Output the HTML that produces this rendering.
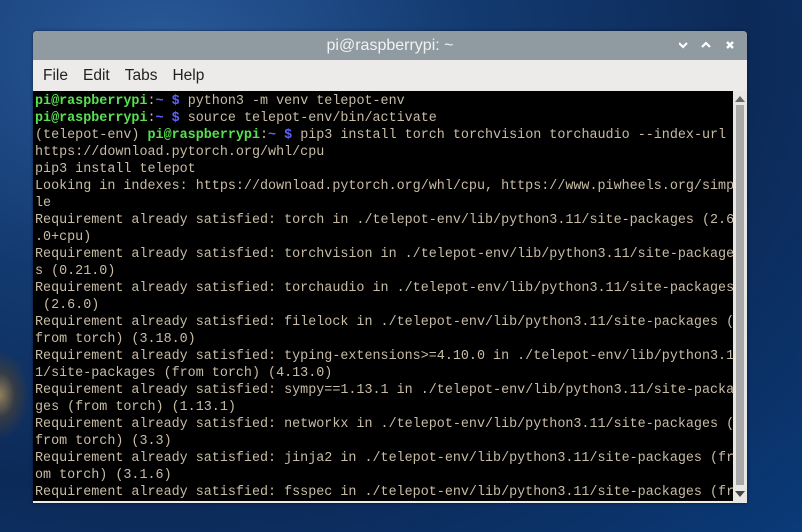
<!DOCTYPE html>
<html><head><meta charset="utf-8"><style>
html,body{margin:0;padding:0;width:802px;height:532px;overflow:hidden;}
body{background:radial-gradient(ellipse at 20% 10%,#2a5a9a 0%,#133a70 35%,#0c2a58 65%,#0a3a78 100%);position:relative;font-family:"Liberation Sans",sans-serif;}
.glow{position:absolute;left:0;top:350px;width:30px;height:90px;background:radial-gradient(ellipse at 0% 50%,rgba(200,160,90,.7) 0%,rgba(90,70,40,.5) 35%,transparent 70%);}
.win{position:absolute;left:33px;top:31px;width:714px;height:472px;background:#edebe9;border-radius:4px 4px 0 0;overflow:hidden;box-shadow:0 0 3px rgba(0,0,0,.5);}
.title{height:29px;background:#8f9aa1;color:#f2f2f2;font-size:16px;text-align:center;line-height:29px;position:relative;}
.ctl{position:absolute;top:0;}
.menu{height:31px;font-size:15.5px;color:#222;line-height:31px;padding-left:10px;}
.menu span{margin-right:15px;}
.term{position:absolute;left:0;top:60px;width:700px;height:410px;background:#000;overflow:hidden;}
pre{margin:0;padding:2px 0 0 2px;font-family:"Liberation Mono",monospace;font-size:13.4px;line-height:17px;color:#c8bca6;white-space:pre;}
.g{color:#58e050;font-weight:bold}.b{color:#6060ff;font-weight:bold}
.sb{position:absolute;left:700px;top:60px;width:14px;height:412px;background:#e8e6e4;}
.thumb{position:absolute;left:3px;top:14px;width:8px;height:380px;background:#a8a8a8;}
</style></head><body>
<div class="glow"></div>
<div class="win">
 <div class="title">pi@raspberrypi: ~
  <svg class="ctl" style="left:646px" width="70" height="29" viewBox="0 0 70 29">
   <path d="M0 12 l4 4 l4 -4" stroke="#fff" stroke-width="2.2" fill="none"/>
   <path d="M23 16 l4 -4 l4 4" stroke="#fff" stroke-width="2.2" fill="none"/>
   <path d="M48 11 l6 6 M54 11 l-6 6" stroke="#fff" stroke-width="2.4"/>
  </svg>
 </div>
 <div class="menu"><span>File</span><span>Edit</span><span>Tabs</span><span>Help</span></div>
 <div class="term"><pre><span class="g">pi@raspberrypi</span>:<span class="b">~ $</span> python3 -m venv telepot-env
<span class="g">pi@raspberrypi</span>:<span class="b">~ $</span> source telepot-env/bin/activate
(telepot-env) <span class="g">pi@raspberrypi</span>:<span class="b">~ $</span> pip3 install torch torchvision torchaudio --index-url
https://download.pytorch.org/whl/cpu
pip3 install telepot
Looking in indexes: https://download.pytorch.org/whl/cpu, https://www.piwheels.org/simp
le
Requirement already satisfied: torch in ./telepot-env/lib/python3.11/site-packages (2.6
.0+cpu)
Requirement already satisfied: torchvision in ./telepot-env/lib/python3.11/site-package
s (0.21.0)
Requirement already satisfied: torchaudio in ./telepot-env/lib/python3.11/site-packages
 (2.6.0)
Requirement already satisfied: filelock in ./telepot-env/lib/python3.11/site-packages (
from torch) (3.18.0)
Requirement already satisfied: typing-extensions&gt;=4.10.0 in ./telepot-env/lib/python3.1
1/site-packages (from torch) (4.13.0)
Requirement already satisfied: sympy==1.13.1 in ./telepot-env/lib/python3.11/site-packa
ges (from torch) (1.13.1)
Requirement already satisfied: networkx in ./telepot-env/lib/python3.11/site-packages (
from torch) (3.3)
Requirement already satisfied: jinja2 in ./telepot-env/lib/python3.11/site-packages (fr
om torch) (3.1.6)
Requirement already satisfied: fsspec in ./telepot-env/lib/python3.11/site-packages (fr</pre></div>
 <div class="sb"><div class="thumb"></div>
  <svg style="position:absolute;left:2px;top:5px" width="10" height="6"><path d="M0 6 L5 0 L10 6Z" fill="#666"/></svg>
  <svg style="position:absolute;left:2px;top:400px" width="10" height="6"><path d="M0 0 L5 6 L10 0Z" fill="#444"/></svg>
 </div>
</div>
</body></html>
